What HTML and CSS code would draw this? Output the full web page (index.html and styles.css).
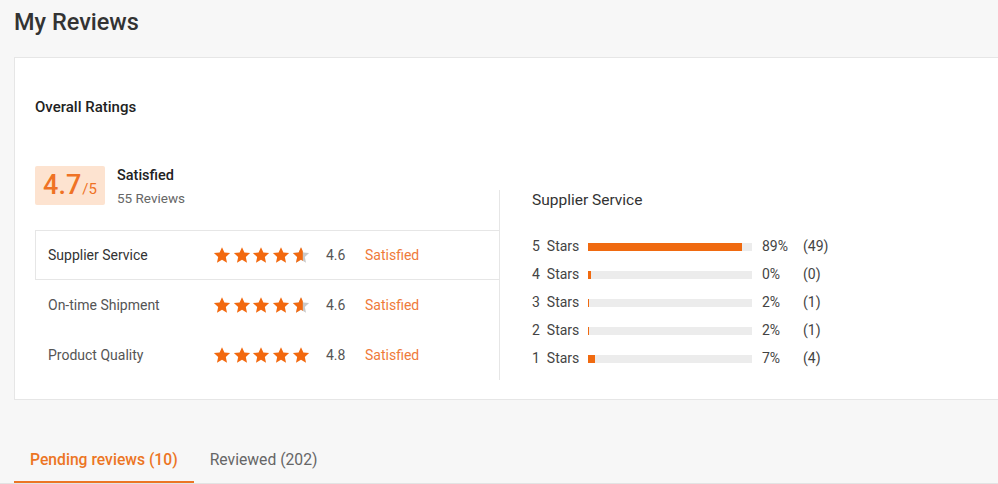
FILE: index.html
```html
<!DOCTYPE html>
<html>
<head>
<meta charset="utf-8">
<link rel="stylesheet" href="styles.css">
</head>
<body>
<svg width="0" height="0" class="defs">
  <defs>
    <symbol id="star" viewBox="0 0 24 24"><path d="M12 1.5l3.2 7.1 7.6.8-5.7 5.2 1.6 7.6L12 18.3l-6.7 3.9 1.6-7.6L1.2 9.4l7.6-.8z"/></symbol>
    <clipPath id="half6"><rect x="0" y="0" width="14.4" height="24"/></clipPath>
  </defs>
</svg>
<div class="page">
  <h1 class="title">My Reviews</h1>
  <div class="card">
    <div class="card-title">Overall Ratings</div>
    <div class="summary">
      <div class="left">
        <div class="score-head">
          <div class="score-box"><span class="big">4.7</span><span class="small">/5</span></div>
          <div class="score-text">
            <div class="sat">Satisfied</div>
            <div class="count">55 Reviews</div>
          </div>
        </div>
        <div class="row active">
          <div class="label">Supplier Service</div>
          <div class="stars">
            <svg class="st"><use href="#star"/></svg><svg class="st"><use href="#star"/></svg><svg class="st"><use href="#star"/></svg><svg class="st"><use href="#star"/></svg>
            <svg class="st part" viewBox="0 0 24 24"><use href="#star" class="grey"/><g clip-path="url(#half6)"><use href="#star"/></g></svg>
          </div>
          <div class="num">4.6</div>
          <div class="state">Satisfied</div>
        </div>
        <div class="row">
          <div class="label">On-time Shipment</div>
          <div class="stars">
            <svg class="st"><use href="#star"/></svg><svg class="st"><use href="#star"/></svg><svg class="st"><use href="#star"/></svg><svg class="st"><use href="#star"/></svg>
            <svg class="st part" viewBox="0 0 24 24"><use href="#star" class="grey"/><g clip-path="url(#half6)"><use href="#star"/></g></svg>
          </div>
          <div class="num">4.6</div>
          <div class="state">Satisfied</div>
        </div>
        <div class="row">
          <div class="label">Product Quality</div>
          <div class="stars">
            <svg class="st"><use href="#star"/></svg><svg class="st"><use href="#star"/></svg><svg class="st"><use href="#star"/></svg><svg class="st"><use href="#star"/></svg><svg class="st"><use href="#star"/></svg>
          </div>
          <div class="num">4.8</div>
          <div class="state">Satisfied</div>
        </div>
      </div>
      <div class="right">
        <div class="r-title">Supplier Service</div>
        <div class="bars">
          <div class="bar-row"><span class="b-label">5&nbsp; Stars</span><div class="track"><div class="fill" style="width:94%"></div></div><span class="pct">89%</span><span class="cnt">(49)</span></div>
          <div class="bar-row"><span class="b-label">4&nbsp; Stars</span><div class="track"><div class="fill" style="width:2%"></div></div><span class="pct">0%</span><span class="cnt">(0)</span></div>
          <div class="bar-row"><span class="b-label">3&nbsp; Stars</span><div class="track"><div class="fill" style="width:1px"></div></div><span class="pct">2%</span><span class="cnt">(1)</span></div>
          <div class="bar-row"><span class="b-label">2&nbsp; Stars</span><div class="track"><div class="fill" style="width:1px"></div></div><span class="pct">2%</span><span class="cnt">(1)</span></div>
          <div class="bar-row"><span class="b-label">1&nbsp; Stars</span><div class="track"><div class="fill" style="width:7px"></div></div><span class="pct">7%</span><span class="cnt">(4)</span></div>
        </div>
      </div>
    </div>
  </div>
  <div class="tabs">
    <div class="tab on">Pending reviews (10)</div>
    <div class="tab">Reviewed (202)</div>
  </div>
</div>
</body>
</html>
```

FILE: styles.css
```css
html, body {
  margin: 0;
  padding: 0;
}
body {
  background: #f7f7f7;
  font-family: Roboto, "Liberation Sans", Arial, sans-serif;
  color: #333;
  overflow: hidden;
  width: 998px;
  height: 484px;
}
.defs {
  position: absolute;
  width: 0;
  height: 0;
}
.page {
  padding-left: 14px;
}
.title {
  margin: 0;
  font-size: 23.5px;
  font-weight: 500;
  line-height: 44px;
  color: #333;
}
.card {
  margin-top: 13px;
  width: 1000px;
  height: 343px;
  box-sizing: border-box;
  background: #fff;
  border: 1px solid #e6e6e6;
  padding: 39px 0 0 20px;
}
.card-title {
  font-size: 15px;
  font-weight: 500;
  line-height: 20px;
  color: #222;
}
.summary {
  display: flex;
  align-items: flex-start;
  margin-top: 49px;
}
.left {
  width: 464px;
}
.score-head {
  display: flex;
  align-items: flex-start;
  height: 39px;
  margin-bottom: 25px;
}
.score-box {
  width: 70px;
  height: 39px;
  background: #fde3d0;
  border-radius: 2px;
  display: flex;
  align-items: baseline;
  justify-content: center;
  box-sizing: border-box;
  padding-top: 1px;
  color: #ef7225;
}
.score-box .big {
  font-size: 27px;
  line-height: 36px;
  font-weight: 500;
}
.score-box .small {
  font-size: 15px;
  margin-left: 1px;
}
.score-text {
  margin-left: 12px;
  padding-top: 1px;
}
.sat {
  font-size: 14.5px;
  font-weight: 500;
  line-height: 18px;
  color: #222;
}
.count {
  font-size: 13.5px;
  color: #666;
  line-height: 18px;
  margin-top: 4px;
}
.row {
  display: flex;
  align-items: center;
  height: 50px;
  box-sizing: border-box;
  padding-left: 13px;
  font-size: 14px;
}
.row.active {
  border: 1px solid #e6e6e6;
  border-right: none;
  padding-left: 12px;
}
.label {
  width: 165px;
  color: #333;
}
.row:not(.active) .label {
  color: #555;
}
.stars {
  display: flex;
  gap: 1.7px;
  width: 98px;
}
.st {
  width: 18px;
  height: 18px;
  fill: #f2690f;
}
.st .grey {
  fill: #c9c9c9;
}
.num {
  margin-left: 15px;
  width: 39px;
  color: #555;
  font-size: 14px;
}
.state {
  color: #ef7a3a;
  font-size: 14px;
}
.right {
  margin-top: 24px;
  border-left: 1px solid #e6e6e6;
  height: 190px;
  padding-left: 32px;
}
.r-title {
  font-size: 15.5px;
  line-height: 20px;
  color: #333;
}
.bars {
  margin-top: 22px;
}
.bar-row {
  display: flex;
  align-items: center;
  height: 28px;
  font-size: 14px;
  color: #444;
}
.b-label {
  width: 56px;
}
.track {
  width: 164px;
  height: 8px;
  background: #ececec;
  margin-top: 2px;
}
.fill {
  height: 100%;
  background: #f06a10;
}
.pct {
  margin-left: 10px;
  width: 41px;
}
.tabs {
  margin-top: 39px;
  margin-left: -14px;
  padding-left: 14px;
  display: flex;
  border-bottom: 1px solid #e3e3e3;
  height: 45px;
  box-sizing: border-box;
}
.tab {
  padding: 0 16px;
  font-size: 15.7px;
  line-height: 42px;
  color: #666;
}
.tab.on {
  color: #ec7524;
  font-weight: 500;
  border-bottom: 2px solid #ec7524;
}
```
